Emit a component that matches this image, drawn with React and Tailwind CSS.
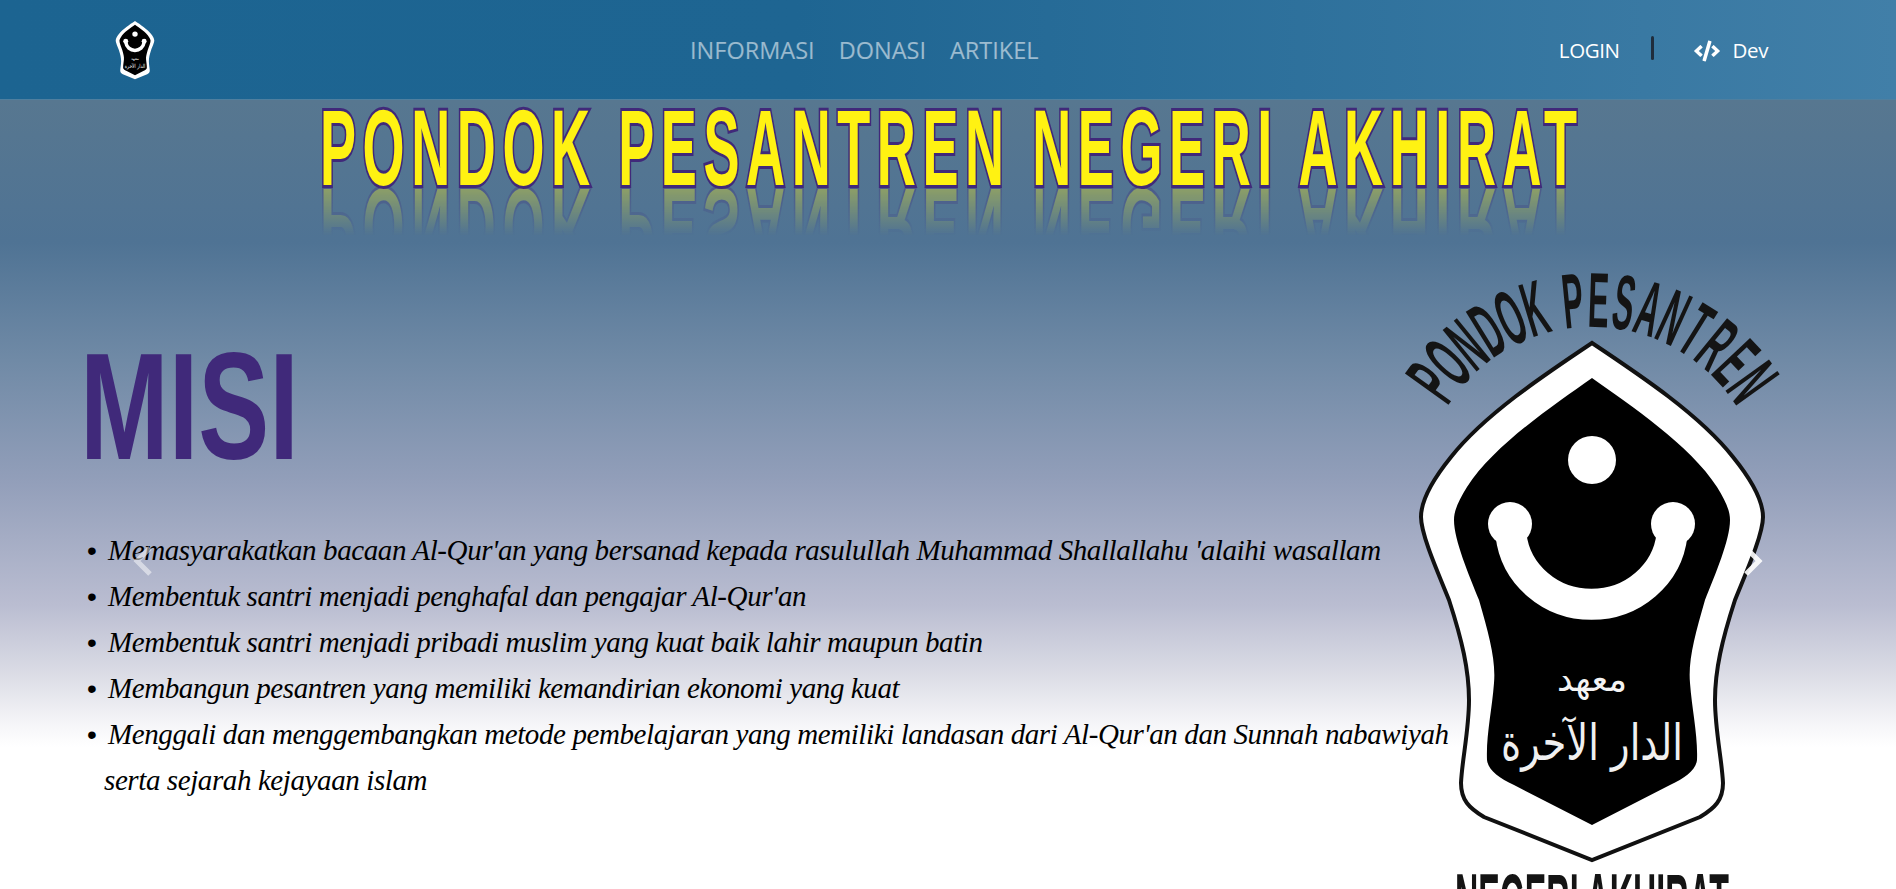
import React from "react";
import { FaCode } from "react-icons/fa";

const OUTER = "M192 93 C240 125 300 165 333 207 C350 228 363 250 363 267 C363 285 345 325 335 350 C322 390 315 420 315 450 C315 480 322 510 323 533 C323 550 315 558 300 567 L192 610 L84 567 C69 558 61 550 61 533 C62 510 69 480 69 450 C69 420 62 390 49 350 C39 325 21 285 21 267 C21 250 34 228 51 207 C84 165 144 125 192 93 Z";
const INNER = "M192 128 C230 155 290 195 317 237 C325 250 330 260 330 270 C330 290 315 325 305 350 C295 385 288 410 290 433 C292 460 298 485 297 510 C296 520 285 528 270 535 L192 575 L114 535 C99 528 88 520 87 510 C86 485 92 460 94 433 C96 410 89 385 79 350 C69 325 54 290 54 270 C54 260 59 250 67 237 C94 195 154 155 192 128 Z";

function Shield({ outline }) {
  return (
    <g>
      <path d={OUTER} fill="#ffffff" stroke={outline ? "#111111" : "none"} strokeWidth="4" />
      <path d={INNER} fill="#000000" />
      <circle cx="192" cy="210" r="24" fill="#ffffff" />
      <circle cx="110" cy="274" r="22" fill="#ffffff" />
      <circle cx="273" cy="274" r="22" fill="#ffffff" />
      <path d="M111 285 A81 78 0 0 0 272 285" fill="none" stroke="#ffffff" strokeWidth="31" />
      <text x="192" y="441" textAnchor="middle" fill="#f4f4f4" fontSize="35" fontFamily="'DejaVu Sans', sans-serif" direction="rtl">معهد</text>
      <text transform="translate(192 510) scale(0.77 1)" textAnchor="middle" fill="#f0f0f0" fontSize="50" fontFamily="'DejaVu Sans', sans-serif" direction="rtl">الدار الآخرة</text>
    </g>
  );
}

const ARC = "PONDOK PESANTREN".split("");

function Logo() {
  const R = 171;
  const cx = 192;
  const cy = 248;
  const weights = ARC.map((c) => (c === " " ? 0.5 : 1));
  const total = weights.reduce((a, b) => a + b, 0);
  let used = 0;
  return (
    <svg width="400" height="639" viewBox="0 0 400 639" className="block overflow-visible">
      {ARC.map((c, i) => {
        const mid = used + weights[i] / 2;
        used += weights[i];
        const a = -58 + (mid / total) * 116;
        return (
          <text
            key={i}
            transform={`rotate(${a} ${cx} ${cy}) translate(${cx} ${cy - R}) scale(0.4 1)`}
            textAnchor="middle"
            fontFamily="'Liberation Sans', sans-serif"
            fontWeight="700"
            fontSize="78"
            fill="#141414"
          >
            {c}
          </text>
        );
      })}
      <Shield outline />
      <text
        x="192"
        y="678"
        textAnchor="middle"
        textLength="274"
        lengthAdjust="spacingAndGlyphs"
        fontFamily="'Liberation Sans', sans-serif"
        fontWeight="700"
        fontSize="78"
        fill="#141414"
      >
        NEGERI AKHIRAT
      </text>
    </svg>
  );
}

const ITEMS = [
  "Memasyarakatkan bacaan Al-Qur'an yang bersanad kepada rasulullah Muhammad Shallallahu 'alaihi wasallam",
  "Membentuk santri menjadi penghafal dan pengajar Al-Qur'an",
  "Membentuk santri menjadi pribadi muslim yang kuat baik lahir maupun batin",
  "Membangun pesantren yang memiliki kemandirian ekonomi yang kuat",
];

function Bullet() {
  return <span className="inline-block w-[21px] ml-[-17px] not-italic leading-[0] tracking-normal font-['Liberation_Sans',sans-serif] text-[28px]">•</span>;
}

export default function App() {
  return (
    <div className="h-[889px] overflow-hidden bg-white font-['Open_Sans',sans-serif]">
      <header className="h-[100px] flex items-center bg-[linear-gradient(90deg,#1c6491_0%,#1e6592_42%,#417fa8_100%)] border-b border-[#4f7f9f]">
        <div className="w-[690px] shrink-0 pl-[115px]">
          <svg width="40" height="60" viewBox="50 85 284 532" className="block">
            <Shield />
          </svg>
        </div>
        <nav className="flex gap-[24px] mt-[2px] text-[23.5px] text-white/55">
          <span>INFORMASI</span>
          <span>DONASI</span>
          <span>ARTIKEL</span>
        </nav>
        <div className="ml-auto mt-[2px] pr-[128px] flex items-center text-white text-[20.5px] tracking-[-0.4px]">
          <span>LOGIN</span>
          <span className="ml-[31px] mr-[40px] w-[3px] h-[24px] -mt-[5px] rounded-sm bg-[#1f2d3d]" />
          <FaCode className="w-[26px] h-[26px]" />
          <span className="ml-[13px]">Dev</span>
        </div>
      </header>

      <main className="relative h-[789px] overflow-hidden bg-[linear-gradient(180deg,#577790_0%,#4f7394_18%,#708aa6_33%,#939fba_48.6%,#babdd1_64%,#dcdde6_73%,#f5f5f8_79%,#ffffff_82%,#ffffff_100%)]">
        <div className="h-[140px] pt-[7px] pl-[320px]">
          <h1 className="w-max whitespace-nowrap origin-top-left scale-y-[2] text-[54px] leading-[40px] font-bold font-['Liberation_Sans',sans-serif] tracking-[6.6px] text-[#fff212] [-webkit-text-stroke:3px_#40297a] [paint-order:stroke_fill] [-webkit-box-reflect:below_0_linear-gradient(transparent_40%,rgba(255,255,255,0.35))]">
            PONDOK PESANTREN NEGERI AKHIRAT
          </h1>
        </div>

        <div className="flex items-start mt-[10px]">
          <div className="w-[1400px] shrink-0 pl-[85px]">
            <h2 className="mt-[81px] -ml-[5px] h-[150px] whitespace-nowrap origin-left scale-x-[0.7] text-[152px] leading-[150px] font-bold font-['Liberation_Sans',sans-serif] text-[#40297a]">
              MISI
            </h2>
            <ul className="mt-[46px] pl-[19px] whitespace-nowrap italic text-[29px] tracking-[-0.4px] leading-[46px] text-black font-['Liberation_Serif',serif]">
              {ITEMS.map((t) => (
                <li key={t}>
                  <Bullet />
                  {t}
                </li>
              ))}
              <li>
                <Bullet />
                Menggali dan menggembangkan metode pembelajaran yang memiliki landasan dari Al-Qur'an dan Sunnah nabawiyah
                <br />
                serta sejarah kejayaan islam
              </li>
            </ul>
          </div>
          <Logo />
        </div>

        <svg width="20" height="30" viewBox="0 0 20 30" className="absolute left-[133px] top-[446px] opacity-50">
          <path d="M17 2 L4 15 L17 28" fill="none" stroke="#ffffff" strokeWidth="5" />
        </svg>
        <svg width="20" height="30" viewBox="0 0 20 30" className="absolute left-[1743px] top-[446px] opacity-90">
          <path d="M3 2 L16 15 L3 28" fill="none" stroke="#ffffff" strokeWidth="5" />
        </svg>
      </main>
    </div>
  );
}
